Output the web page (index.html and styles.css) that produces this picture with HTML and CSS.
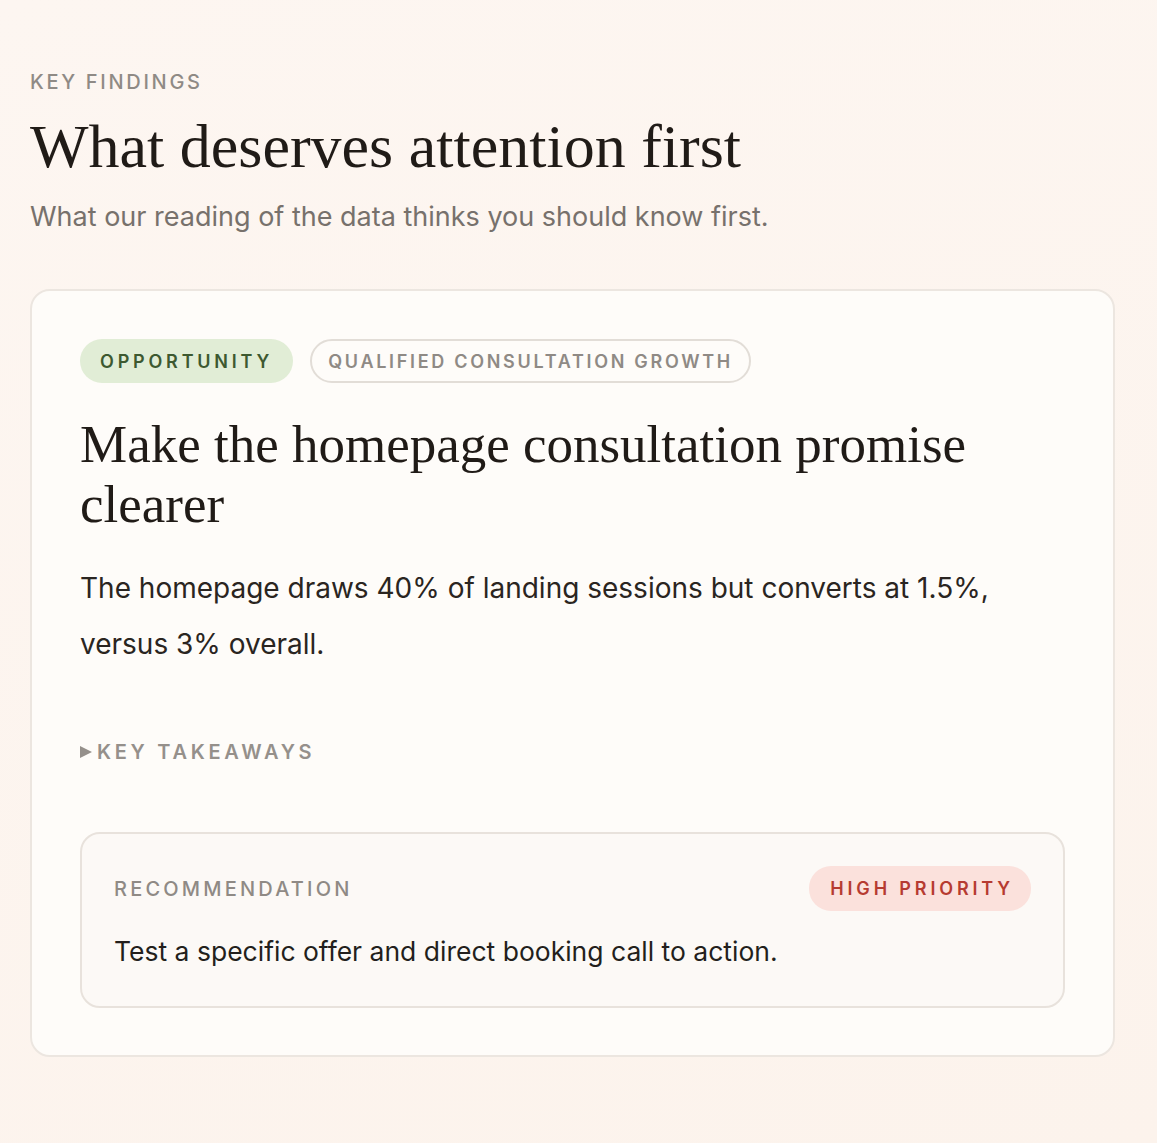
FILE: index.html
```html
<!DOCTYPE html>
<html lang="en">
<head>
    <meta charset="UTF-8">
    <meta name="viewport" content="width=device-width, initial-scale=1.0">
    <title>Key Findings</title>
    <link rel="stylesheet" href="styles.css">
</head>
<body>
    <main class="page">
        <p class="eyebrow">Key findings</p>
        <h1 class="page-title">What deserves attention first</h1>
        <p class="page-sub">What our reading of the data thinks you should know first.</p>

        <article class="finding">
            <div class="tags">
                <span class="tag tag-opportunity">Opportunity</span>
                <span class="tag tag-outline">Qualified consultation growth</span>
            </div>

            <h2 class="finding-title">Make the homepage consultation promise clearer</h2>
            <p class="finding-body">The homepage draws 40% of landing sessions but converts at 1.5%, versus 3% overall.</p>

            <details class="takeaways">
                <summary>Key takeaways</summary>
            </details>

            <div class="rec">
                <div class="rec-head">
                    <span class="rec-label">Recommendation</span>
                    <span class="tag tag-priority">High priority</span>
                </div>
                <p class="rec-text">Test a specific offer and direct booking call to action.</p>
            </div>
        </article>
    </main>
</body>
</html>
```

FILE: styles.css
```css
body {
    margin: 0;
    min-height: 1143px;
    font-family: Inter, "Liberation Sans", Arial, sans-serif;
    background: linear-gradient(160deg, #fdf6f1 0%, #fcf3ec 100%);
    color: #231f1c;
}
.page {
    padding: 70px 42px 60px 30px;
}
.eyebrow {
    margin: 0;
    font-size: 20px;
    line-height: 24px;
    font-weight: 500;
    letter-spacing: 2.7px;
    text-transform: uppercase;
    color: #8f8a85;
}
.page-title {
    margin: 16px 0 0;
    font-family: "Liberation Serif", "Times New Roman", serif;
    font-weight: normal;
    font-size: 62px;
    line-height: 72px;
    color: #201b17;
}
.page-sub {
    margin: 19px 0 0;
    font-size: 27px;
    line-height: 32px;
    color: #77716c;
}
.finding {
    margin-top: 56px;
    padding: 48px 48px 47px;
    background: #fefcf9;
    border: 2px solid #ece6e0;
    border-radius: 20px;
}
.tags {
    display: flex;
    gap: 17px;
}
.tag {
    display: inline-flex;
    align-items: center;
    height: 44px;
    padding: 0 20px;
    border-radius: 22px;
    font-size: 18px;
    font-weight: 600;
    letter-spacing: 3px;
    text-transform: uppercase;
    box-sizing: border-box;
}
.tag-opportunity {
    background: #e1edd6;
    color: #3d5930;
    letter-spacing: 3.8px;
}
.tag-outline {
    border: 2px solid #e2ddd7;
    color: #8f8a85;
    padding: 0 16px;
    letter-spacing: 2.7px;
}
.tag-priority {
    height: 45px;
    padding: 0 17px 0 21px;
    background: #fbe1dc;
    color: #b63b31;
    letter-spacing: 3.85px;
}
.finding-title {
    margin: 31px 0 0;
    font-family: "Liberation Serif", "Times New Roman", serif;
    font-weight: normal;
    font-size: 53px;
    line-height: 60px;
    color: #201b17;
}
.finding-body {
    margin: 26px 0 0;
    font-size: 28px;
    line-height: 56px;
    color: #2a2521;
}
.takeaways {
    margin-top: 68px;
}
.takeaways summary {
    list-style: none;
    cursor: pointer;
    font-size: 20px;
    line-height: 24px;
    font-weight: 600;
    letter-spacing: 3.7px;
    text-transform: uppercase;
    color: #95908b;
}
.takeaways summary::before {
    content: "";
    display: inline-block;
    width: 0;
    height: 0;
    border-top: 6px solid transparent;
    border-bottom: 6px solid transparent;
    border-left: 12px solid #95908b;
    margin-right: 5px;
    vertical-align: 1px;
}
.rec {
    margin-top: 68px;
    padding: 32px 32px 40px;
    background: #fcf9f6;
    border: 2px solid #e8e2dc;
    border-radius: 20px;
}
.rec-head {
    display: flex;
    justify-content: space-between;
    align-items: center;
}
.rec-label {
    font-size: 20px;
    font-weight: 500;
    letter-spacing: 3.2px;
    text-transform: uppercase;
    color: #8f8a85;
}
.rec-text {
    margin: 25px 0 0;
    font-size: 26.5px;
    line-height: 30px;
    color: #231f1c;
}
```
